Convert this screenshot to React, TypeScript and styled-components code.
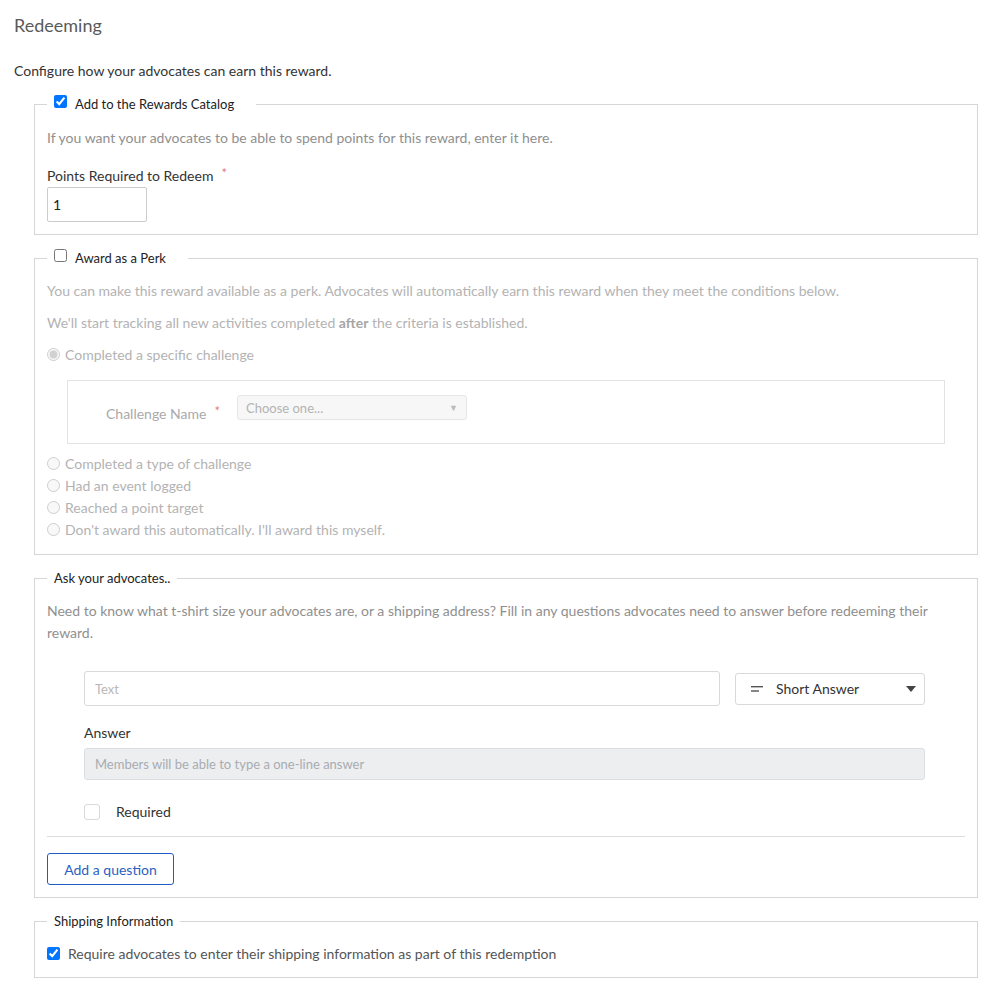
import React from "react";
import styled, { createGlobalStyle } from "styled-components";

const Global = createGlobalStyle`
  html, body { margin: 0; padding: 0; background: #fff; }
  body { font-family: Lato, "Open Sans", sans-serif; font-size: 14px; color: #333; }
  * { box-sizing: border-box; }
`;

const Page = styled.div`
  padding: 14px 18px 20px 14px;
`;

const Title = styled.h2`
  margin: 0;
  font-size: 18px;
  line-height: 22px;
  font-weight: 400;
  color: #5a5a5a;
`;

const Intro = styled.p`
  margin: 25px 0 13px;
  line-height: 20px;
  color: #333;
`;

const Fieldset = styled.fieldset<{ $pb?: number }>`
  margin: 0 0 13px 20px;
  padding: 0 12px ${(p) => p.$pb ?? 12}px;
  border: 1px solid #d6d6d6;
  min-width: 0;
`;

const Legend = styled.legend<{ $wide?: boolean }>`
  padding: 0 ${(p) => (p.$wide ? 22 : 7)}px 0 7px;
  margin-left: 0;
  line-height: 20px;
  font-size: 13px;
  color: #222;
  display: flex;
  align-items: center;
  gap: 8px;
`;

const LegendCheck = styled.input`
  margin: 0;
  width: 13px;
  height: 13px;
  position: relative;
  top: -3px;
`;

const Help = styled.p<{ $muted?: boolean; $top?: number }>`
  margin: ${(p) => p.$top ?? 12}px 0 0;
  line-height: 20px;
  color: ${(p) => (p.$muted ? "#b3b3b3" : "#8f8f8f")};
  b { font-weight: 700; color: #a6a6a6; }
`;

const Label = styled.label`
  display: block;
  margin-top: 18px;
  line-height: 20px;
  color: #333;
`;

const Star = styled.span`
  color: #e07c7c;
  margin-left: 8px;
  font-size: 13px;
  position: relative;
  top: -3px;
`;

const SmallInput = styled.input`
  display: block;
  margin-top: 1px;
  width: 100px;
  height: 35px;
  border: 1px solid #ccc;
  border-radius: 2px;
  padding: 0 5px;
  font: inherit;
  color: #222;
`;

const RadioRow = styled.label<{ $first?: boolean }>`
  display: flex;
  align-items: center;
  gap: 5px;
  line-height: 22px;
  color: #b3b3b3;
  margin-top: ${(p) => (p.$first ? 11 : 0)}px;
  input { margin: 0; width: 13px; height: 13px; position: relative; top: -1px; }
`;

const SubBox = styled.div`
  margin: 14px 20px 9px 20px;
  border: 1px solid #e3e3e3;
  height: 64px;
  padding: 14px 0 0 38px;
  display: flex;
  align-items: flex-start;
`;

const SubLabel = styled.span`
  color: #aaa;
  line-height: 20px;
  margin-top: 9px;
  width: 131px;
  display: flex;
`;

const FakeSelect = styled.div`
  width: 230px;
  height: 25px;
  border: 1px solid #e6e6e6;
  background: #f7f7f7;
  border-radius: 3px;
  color: #b3b3b3;
  font-size: 13px;
  padding: 0 8px;
  display: flex;
  align-items: center;
  justify-content: space-between;
  span.caret { font-size: 9px; color: #bbb; }
`;

const Question = styled.div`
  margin: 27px 40px 0 37px;
`;

const QRow = styled.div`
  display: flex;
  align-items: center;
  gap: 15px;
`;

const TextInput = styled.input`
  flex: 1;
  height: 35px;
  border: 1px solid #d9d9d9;
  border-radius: 3px;
  padding: 0 10px;
  font: inherit;
  font-size: 13px;
  &::placeholder { color: #b8b8b8; }
`;

const TypeSelect = styled.div`
  width: 190px;
  height: 32px;
  border: 1px solid #d9d9d9;
  border-radius: 3px;
  display: flex;
  align-items: center;
  padding: 0 8px 0 15px;
  font-size: 14px;
  color: #333;
  gap: 13px;
  svg.caret { margin-left: auto; }
`;

const AnswerLabel = styled.div`
  margin-top: 17px;
  line-height: 20px;
  color: #333;
`;

const DisabledInput = styled.input`
  display: block;
  width: 100%;
  margin-top: 5px;
  height: 32px;
  border: 1px solid #dcdfe2;
  border-radius: 3px;
  background: #eceef0;
  padding: 0 10px;
  font: inherit;
  font-size: 13px;
  &::placeholder { color: #a8acb0; }
`;

const RequiredRow = styled.label`
  display: flex;
  align-items: center;
  gap: 16px;
  margin-top: 24px;
  line-height: 16px;
  color: #333;
`;

const Box = styled.span`
  width: 16px;
  height: 16px;
  border: 1px solid #d9d9d9;
  border-radius: 3px;
  display: inline-block;
`;

const Rule = styled.hr`
  border: 0;
  border-top: 1px solid #dcdcdc;
  margin: 16px 0 16px;
`;

const Button = styled.button`
  height: 32px;
  width: 127px;
  border: 1px solid #1f5cc4;
  border-radius: 3px;
  background: #fff;
  color: #2b5fc2;
  font: inherit;
  font-size: 14px;
  cursor: pointer;
`;

const ShipRow = styled.label`
  display: flex;
  align-items: center;
  gap: 8px;
  margin-top: 13px;
  line-height: 20px;
  color: #555;
  input { margin: 0; width: 13px; height: 13px; position: relative; top: -1px; }
`;

export default function App() {
  return (
    <>
      <Global />
      <Page>
        <Title>Redeeming</Title>
        <Intro>Configure how your advocates can earn this reward.</Intro>

        <Fieldset>
          <Legend $wide>
            <LegendCheck type="checkbox" defaultChecked />
            Add to the Rewards Catalog
          </Legend>
          <Help $top={14}>If you want your advocates to be able to spend points for this reward, enter it here.</Help>
          <Label>
            Points Required to Redeem<Star>*</Star>
          </Label>
          <SmallInput defaultValue="1" />
        </Fieldset>

        <Fieldset $pb={13}>
          <Legend $wide>
            <LegendCheck type="checkbox" />
            Award as a Perk
          </Legend>
          <Help $muted $top={13}>
            You can make this reward available as a perk. Advocates will automatically earn this reward when they meet the conditions below.
          </Help>
          <Help $muted>
            We'll start tracking all new activities completed <b>after</b> the criteria is established.
          </Help>
          <RadioRow $first>
            <input type="radio" name="perk" disabled defaultChecked />
            Completed a specific challenge
          </RadioRow>
          <SubBox>
            <SubLabel>
              Challenge Name<Star>*</Star>
            </SubLabel>
            <FakeSelect>
              <span>Choose one...</span>
              <span className="caret">▼</span>
            </FakeSelect>
          </SubBox>
          <RadioRow>
            <input type="radio" name="perk" disabled />
            Completed a type of challenge
          </RadioRow>
          <RadioRow>
            <input type="radio" name="perk" disabled />
            Had an event logged
          </RadioRow>
          <RadioRow>
            <input type="radio" name="perk" disabled />
            Reached a point target
          </RadioRow>
          <RadioRow>
            <input type="radio" name="perk" disabled />
            Don't award this automatically. I'll award this myself.
          </RadioRow>
        </Fieldset>

        <Fieldset>
          <Legend>Ask your advocates..</Legend>
          <Help $top={12} style={{ lineHeight: "22px" }}>
            Need to know what t-shirt size your advocates are, or a shipping address? Fill in any questions advocates need to answer before redeeming their reward.
          </Help>
          <Question>
            <QRow>
              <TextInput placeholder="Text" />
              <TypeSelect>
                <svg width="12" height="6" viewBox="0 0 12 6">
                  <rect x="0" y="0" width="12" height="1.4" fill="#555" />
                  <rect x="0" y="4.3" width="8" height="1.4" fill="#555" />
                </svg>
                Short Answer
                <svg className="caret" width="10" height="6" viewBox="0 0 10 6">
                  <path d="M0 0h10L5 6z" fill="#444" />
                </svg>
              </TypeSelect>
            </QRow>
            <AnswerLabel>Answer</AnswerLabel>
            <DisabledInput disabled placeholder="Members will be able to type a one-line answer" />
            <RequiredRow>
              <Box />
              Required
            </RequiredRow>
          </Question>
          <Rule />
          <Button>Add a question</Button>
        </Fieldset>

        <Fieldset $pb={13}>
          <Legend>Shipping Information</Legend>
          <ShipRow>
            <input type="checkbox" defaultChecked />
            Require advocates to enter their shipping information as part of this redemption
          </ShipRow>
        </Fieldset>
      </Page>
    </>
  );
}
